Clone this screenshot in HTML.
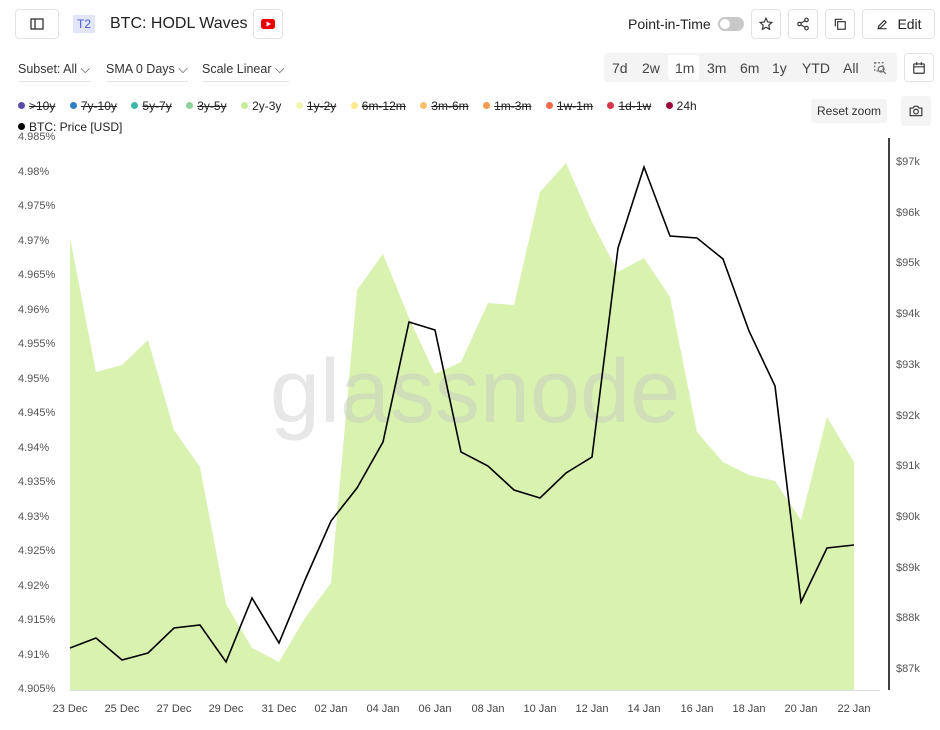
<!DOCTYPE html>
<html><head><meta charset="utf-8"><style>
*{box-sizing:border-box;margin:0;padding:0}
body{width:940px;height:730px;background:#fff;font-family:"Liberation Sans",sans-serif;color:#222;position:relative;overflow:hidden}
.btn{position:absolute;border:1px solid #e3e3e3;border-radius:4px;background:#fff;display:flex;align-items:center;justify-content:center}
.abs{position:absolute}
.dd{position:absolute;top:62px;font-size:12.5px;color:#333;border-bottom:1px solid #e6e6e6;padding-bottom:4px}
.leg{position:absolute;font-size:12px;color:#222;white-space:nowrap}
.leg span{margin-right:14.5px;text-decoration:line-through}
.leg i{display:inline-block;width:7px;height:7px;border-radius:50%;margin-right:4px;vertical-align:1px}
.yl{position:absolute;left:18px;font-size:11px;color:#555}
.yr{position:absolute;left:896px;font-size:11px;color:#555}
.xl{position:absolute;top:703px;font-size:11px;color:#444;width:60px;text-align:center}
</style></head><body>
<div class="btn" style="left:15px;top:9px;width:44px;height:30px"><svg width="14" height="12"><rect x="1" y="1" width="12" height="10" fill="none" stroke="#333" stroke-width="1.3"/><line x1="5" y1="1" x2="5" y2="11" stroke="#333" stroke-width="1.3"/></svg></div>
<div class="abs" style="left:73px;top:15px;width:22px;height:18px;background:#e2e6fb;color:#4a5be0;font-size:12px;text-align:center;line-height:18px">T2</div>
<div class="abs" style="left:110px;top:15px;font-size:16px;color:#222">BTC: HODL Waves</div>
<div class="btn" style="left:253px;top:9px;width:30px;height:30px"><svg width="14" height="10"><rect width="14" height="10" rx="2.5" fill="#e00"/><path d="M5.5 2.5L10 5L5.5 7.5Z" fill="#fff"/></svg></div>
<div class="abs" style="left:628px;top:16px;font-size:14px;color:#222">Point-in-Time</div>
<div class="abs" style="left:718px;top:17px;width:26px;height:14px;border-radius:7px;background:#c8c8c8"><div style="position:absolute;left:2px;top:2px;width:10px;height:10px;border-radius:50%;background:#fff"></div></div>
<div class="btn" style="left:751px;top:9px;width:30px;height:30px"><svg width="14" height="14" viewBox="0 0 24 24"><path d="M12 2l3 6.5 7 .8-5.2 4.8 1.4 7L12 17.6 5.8 21.1l1.4-7L2 9.3l7-.8z" fill="none" stroke="#333" stroke-width="2"/></svg></div>
<div class="btn" style="left:788px;top:9px;width:30px;height:30px"><svg width="14" height="14" viewBox="0 0 24 24" fill="none" stroke="#333" stroke-width="2"><circle cx="18" cy="5" r="3"/><circle cx="6" cy="12" r="3"/><circle cx="18" cy="19" r="3"/><path d="M8.6 13.5l6.8 4M15.4 6.5l-6.8 4"/></svg></div>
<div class="btn" style="left:825px;top:9px;width:30px;height:30px"><svg width="14" height="14" viewBox="0 0 24 24" fill="none" stroke="#333" stroke-width="2"><rect x="8" y="8" width="13" height="13"/><path d="M4 16V4h12"/></svg></div>
<div class="btn" style="left:862px;top:9px;width:73px;height:30px;font-size:14px"><svg width="14" height="14" viewBox="0 0 24 24" fill="none" stroke="#333" stroke-width="2" style="margin-right:8px"><path d="M4 20h16M6 16l10-10 3 3-10 10H6z"/></svg>Edit</div>
<div class="dd" style="left:18px;width:73px">Subset: All ⌵</div>
<div class="dd" style="left:106px;width:82px">SMA 0 Days ⌵</div>
<div class="dd" style="left:202px;width:87px">Scale Linear ⌵</div>
<div class="abs" style="left:604px;top:53px;width:293px;height:29px;background:#f4f4f5;border-radius:3px"></div>
<div class="abs" style="left:668px;top:55px;width:31px;height:25px;background:#fff;border-radius:3px"></div>
<div class="abs" style="left:612px;top:60px;font-size:14px;color:#444;word-spacing:0">
<span style="position:absolute;left:0">7d</span><span style="position:absolute;left:30px">2w</span><span style="position:absolute;left:63px">1m</span><span style="position:absolute;left:95px">3m</span><span style="position:absolute;left:128px">6m</span><span style="position:absolute;left:160px">1y</span><span style="position:absolute;left:190px">YTD</span><span style="position:absolute;left:231px">All</span></div>
<svg class="abs" style="left:873px;top:61px" width="14" height="14" viewBox="0 0 24 24" fill="none" stroke="#666" stroke-width="2" stroke-dasharray="3 3"><path d="M3 3h14v14H3z"/><circle cx="14" cy="14" r="5" stroke-dasharray="0"/><path d="M18 18l4 4" stroke-dasharray="0"/></svg>
<div class="btn" style="left:904px;top:53px;width:30px;height:29px"><svg width="14" height="14" viewBox="0 0 24 24" fill="none" stroke="#333" stroke-width="2"><rect x="3" y="5" width="18" height="16" rx="1"/><path d="M3 10h18M8 2v5M16 2v5"/></svg></div>
<div class="leg" style="left:18px;top:99px"><span><i style="background:#5b4aa8"></i>&gt;10y</span><span><i style="background:#2e7fc4"></i>7y-10y</span><span><i style="background:#3bb7a8"></i>5y-7y</span><span><i style="background:#8fd19e"></i>3y-5y</span><span style="text-decoration:none"><i style="background:#c8ea98"></i>2y-3y</span><span><i style="background:#f2f7b0"></i>1y-2y</span><span><i style="background:#fde98f"></i>6m-12m</span><span><i style="background:#fbc16a"></i>3m-6m</span><span><i style="background:#f89a4f"></i>1m-3m</span><span><i style="background:#ef6a46"></i>1w-1m</span><span><i style="background:#d8344a"></i>1d-1w</span><span style="text-decoration:none"><i style="background:#9c0b3a"></i>24h</span></div>
<div class="leg" style="left:18px;top:120px"><span style="text-decoration:none"><i style="background:#000"></i>BTC: Price [USD]</span></div>
<div class="abs" style="left:811px;top:99px;width:76px;height:24px;background:#f4f4f5;border-radius:3px;font-size:12px;color:#333;text-align:center;line-height:24px">Reset zoom</div>
<div class="abs" style="left:901px;top:96px;width:30px;height:30px;background:#f4f4f5;border-radius:3px;display:flex;align-items:center;justify-content:center"><svg width="14" height="12" viewBox="0 0 24 20" fill="none" stroke="#333" stroke-width="2"><path d="M2 5h5l2-3h6l2 3h5v13H2z"/><circle cx="12" cy="11" r="4"/></svg></div>

<svg class="abs" style="left:0;top:0" width="940" height="730">
<polygon fill="#d9f2b0" points="70,690 70,238 96,372 122,365 148,340 174,430 200,467 226,604 252,648 279,662 305,618 331,583 357,290 383,254 409,318 435,374 461,362 488,303 514,305 540,192 566,163 592,222 618,272 644,258 670,297 697,432 723,462 749,475 775,481 801,520 827,417 854,462 854,690"/>
<line x1="70" y1="690.5" x2="880" y2="690.5" stroke="#ddd"/>
<line x1="889" y1="138" x2="889" y2="690" stroke="#000" stroke-width="1.5"/>
<text x="475" y="422" font-family="Liberation Sans" font-size="90" fill="#c4c4c4" fill-opacity="0.4" text-anchor="middle">glassnode</text>
<polyline fill="none" stroke="#000" stroke-width="1.6" points="70,648 96,638 122,660 148,653 174,628 200,625 226,662 252,598 279,643 305,580 331,521 357,488 383,442 409,322 435,330 461,452 488,466 514,490 540,498 566,473 592,457 618,248 644,167 670,236 697,238 723,259 749,331 775,386 801,602 827,548 854,545"/>
</svg>
<div class="yl" style="top:131px">4.985%</div><div class="yl" style="top:166px">4.98%</div><div class="yl" style="top:200px">4.975%</div><div class="yl" style="top:235px">4.97%</div><div class="yl" style="top:269px">4.965%</div><div class="yl" style="top:304px">4.96%</div><div class="yl" style="top:338px">4.955%</div><div class="yl" style="top:373px">4.95%</div><div class="yl" style="top:407px">4.945%</div><div class="yl" style="top:442px">4.94%</div><div class="yl" style="top:476px">4.935%</div><div class="yl" style="top:511px">4.93%</div><div class="yl" style="top:545px">4.925%</div><div class="yl" style="top:580px">4.92%</div><div class="yl" style="top:614px">4.915%</div><div class="yl" style="top:649px">4.91%</div><div class="yl" style="top:683px">4.905%</div>
<div class="yr" style="top:156px">$97k</div><div class="yr" style="top:207px">$96k</div><div class="yr" style="top:257px">$95k</div><div class="yr" style="top:308px">$94k</div><div class="yr" style="top:359px">$93k</div><div class="yr" style="top:410px">$92k</div><div class="yr" style="top:460px">$91k</div><div class="yr" style="top:511px">$90k</div><div class="yr" style="top:562px">$89k</div><div class="yr" style="top:612px">$88k</div><div class="yr" style="top:663px">$87k</div>
<div class="xl" style="left:40px">23 Dec</div><div class="xl" style="left:92px">25 Dec</div><div class="xl" style="left:144px">27 Dec</div><div class="xl" style="left:196px">29 Dec</div><div class="xl" style="left:249px">31 Dec</div><div class="xl" style="left:301px">02 Jan</div><div class="xl" style="left:353px">04 Jan</div><div class="xl" style="left:405px">06 Jan</div><div class="xl" style="left:458px">08 Jan</div><div class="xl" style="left:510px">10 Jan</div><div class="xl" style="left:562px">12 Jan</div><div class="xl" style="left:614px">14 Jan</div><div class="xl" style="left:667px">16 Jan</div><div class="xl" style="left:719px">18 Jan</div><div class="xl" style="left:771px">20 Jan</div><div class="xl" style="left:824px">22 Jan</div>
</body></html>
